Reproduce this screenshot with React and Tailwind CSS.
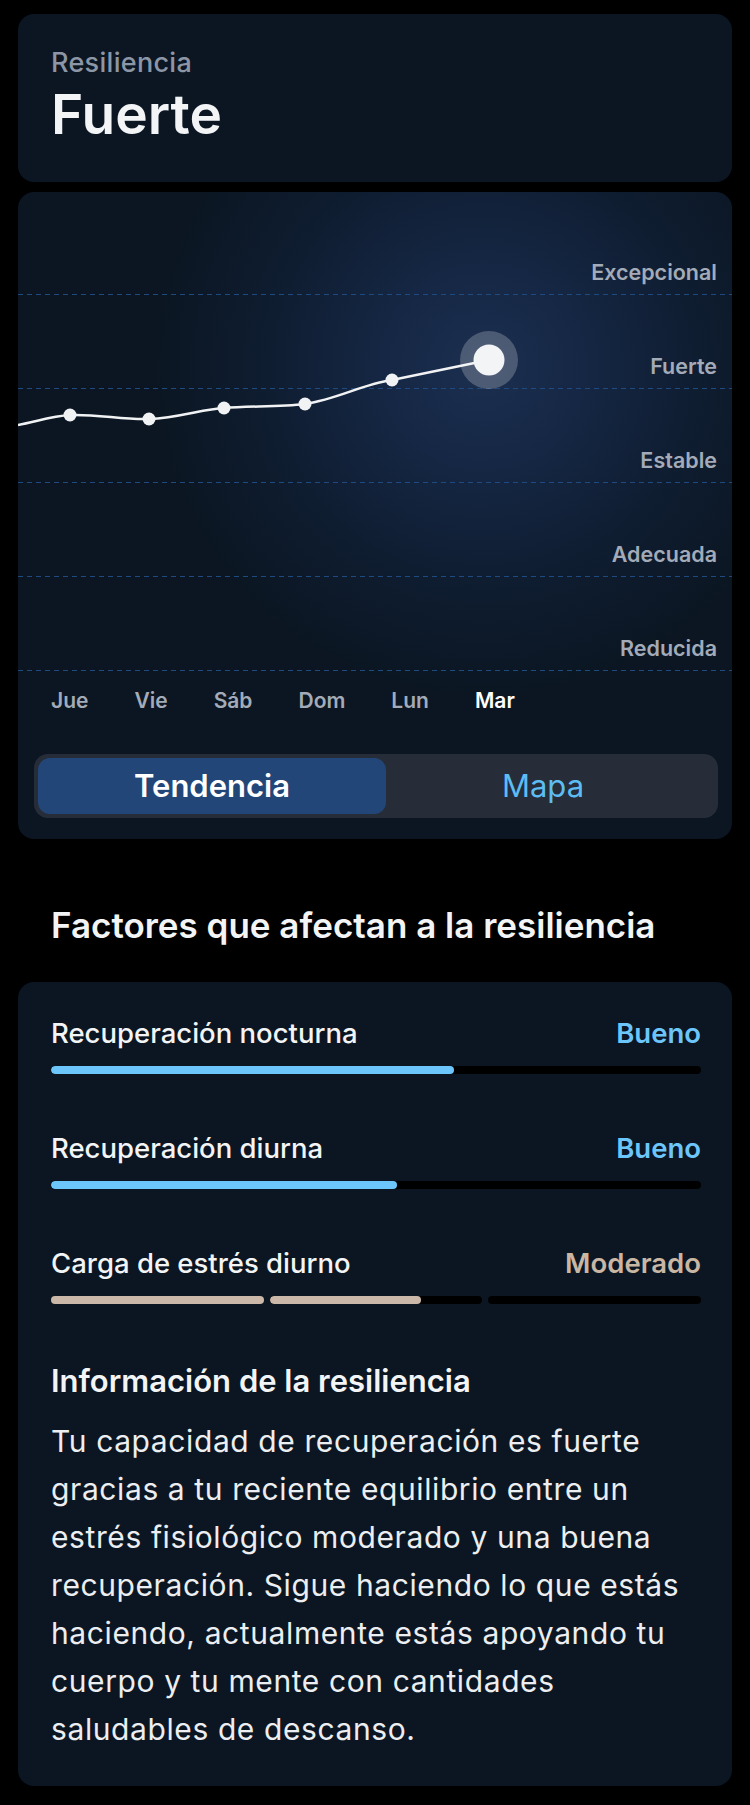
import React from 'react';

const levels = ['Excepcional', 'Fuerte', 'Estable', 'Adecuada', 'Reducida'];
const days = ['Jue', 'Vie', 'Sáb', 'Dom', 'Lun', 'Mar'];

// chart coords are relative to the chart box (716 x 480)
const points = [
  [52, 223],
  [131, 227],
  [206, 216],
  [287, 212],
  [374, 188],
];
const last = [471, 168];
const gridY = [102, 196, 290, 384, 478];

function TrendChart() {
  return (
    <div className="relative h-[480px]">
      <svg className="absolute inset-0" width="716" height="480" viewBox="0 0 716 480">
        {gridY.map((y) => (
          <line key={y} x1="0" x2="716" y1={y + 0.5} y2={y + 0.5} stroke="#1f4a80" strokeWidth="1" strokeDasharray="5 4" />
        ))}
        <path
          d="M0,233 C20,229 35,224 52,223 C80,222 105,228 131,227 C160,226 185,217 206,216 C232,214 262,215 287,212 C320,207 345,192 374,188 L471,168"
          fill="none"
          stroke="#f1f2f4"
          strokeWidth="2.5"
        />
        {points.map(([x, y]) => (
          <circle key={x} cx={x} cy={y} r="6.5" fill="#f1f2f4" />
        ))}
        <circle cx={last[0]} cy={last[1]} r="29" fill="#ffffff" fillOpacity="0.22" />
        <circle cx={last[0]} cy={last[1]} r="15.5" fill="#f3f4f6" />
      </svg>
      <div className="relative flex flex-col">
        {levels.map((l, i) => (
          <div
            key={l}
            className={`flex items-end justify-end pr-[15px] pb-[9px] ${i === 0 ? 'h-[102px]' : 'h-[94px]'}`}
          >
            <span className="text-[21.5px] leading-[26px] font-semibold text-[#a3abb8]">{l}</span>
          </div>
        ))}
      </div>
    </div>
  );
}

function Bar({ pct, color }) {
  return (
    <div className="mt-[17px] h-[8px] w-full bg-black rounded-full overflow-hidden">
      <div className="h-full rounded-full" style={{ width: pct + '%', background: color }} />
    </div>
  );
}

function Factor({ label, value, valueColor, children, first }) {
  return (
    <div className={first ? '' : 'mt-[58px]'}>
      <div className="flex items-baseline justify-between text-[27.5px] leading-[32px] font-medium">
        <span className="text-[#f3f4f6]">{label}</span>
        <span style={{ color: valueColor }} className="font-semibold">{value}</span>
      </div>
      {children}
    </div>
  );
}

export default function App() {
  return (
    <div className="w-[750px] min-h-[1805px] bg-black px-[18px] pt-[14px] pb-[19px] text-white" style={{ fontFamily: 'Inter, "Noto Sans", sans-serif' }}>
      {/* header card */}
      <div className="h-[168px] rounded-[16px] bg-[#0b1622] px-[33px] pt-[34px]">
        <div className="text-[27px] leading-[30px] font-medium tracking-[0.3px] text-[#8d96a6]">Resiliencia</div>
        <div className="mt-[8px] text-[55px] leading-[56px] font-semibold text-[#f3f4f6]">Fuerte</div>
      </div>

      {/* chart card */}
      <div className="mt-[10px] h-[647px] rounded-[16px] overflow-hidden bg-[#0b1622] bg-[radial-gradient(circle_330px_at_465px_175px,#1c2f50_0%,#152744_30%,#0f1d31_65%,#0b1622_100%)]">
        <TrendChart />
        <div className="mt-[17px] flex gap-[46px] pl-[33px] text-[21px] leading-[24px] font-semibold text-[#a3abb8]">
          {days.map((d) => (
            <span key={d} className={d === 'Mar' ? 'text-white' : ''}>{d}</span>
          ))}
        </div>
        <div className="mt-[41px] ml-[16px] mr-[14px] h-[64px] flex p-[4px] rounded-[14px] bg-[#262d39]">
          <div className="w-[348px] flex items-center justify-center rounded-[12px] bg-[#234679] text-[31px] font-semibold text-white">
            Tendencia
          </div>
          <div className="flex-1 flex items-center justify-center pr-[14px] text-[31px] font-normal text-[#5dbdf2]">
            Mapa
          </div>
        </div>
      </div>

      <h2 className="mt-[66px] pl-[33px] text-[35px] leading-[40px] font-semibold text-[#f3f4f6]">
        Factores que afectan a la resiliencia
      </h2>

      {/* factors card */}
      <div className="mt-[37px] rounded-[16px] bg-[#0b1622] pl-[33px] pr-[31px] pt-[35px] pb-[33px]">
        <Factor label="Recuperación nocturna" value="Bueno" valueColor="#6cc6fb" first>
          <Bar pct={62} color="#6cc6fb" />
        </Factor>
        <Factor label="Recuperación diurna" value="Bueno" valueColor="#6cc6fb">
          <Bar pct={53.2} color="#6cc6fb" />
        </Factor>
        <Factor label="Carga de estrés diurno" value="Moderado" valueColor="#c9b6a3">
          <div className="mt-[17px] flex gap-[6px]">
            <div className="flex-1 h-[8px] rounded-full bg-[#cbb8a8]" />
            <div className="flex-1 h-[8px] rounded-full bg-black overflow-hidden">
              <div className="h-full w-[71%] rounded-full bg-[#cbb8a8]" />
            </div>
            <div className="flex-1 h-[8px] rounded-full bg-black" />
          </div>
        </Factor>

        <h3 className="mt-[60px] text-[31px] leading-[34px] font-semibold text-[#f3f4f6]">
          Información de la resiliencia
        </h3>
        <p className="mt-[19px] text-[30px] leading-[48px] tracking-[0.6px] font-normal text-[#eceef1]">
          Tu capacidad de recuperación es fuerte gracias a tu reciente equilibrio entre un estrés fisiológico moderado y una buena recuperación. Sigue haciendo lo que estás haciendo, actualmente estás apoyando tu cuerpo y tu mente con cantidades saludables de descanso.
        </p>
      </div>
    </div>
  );
}
